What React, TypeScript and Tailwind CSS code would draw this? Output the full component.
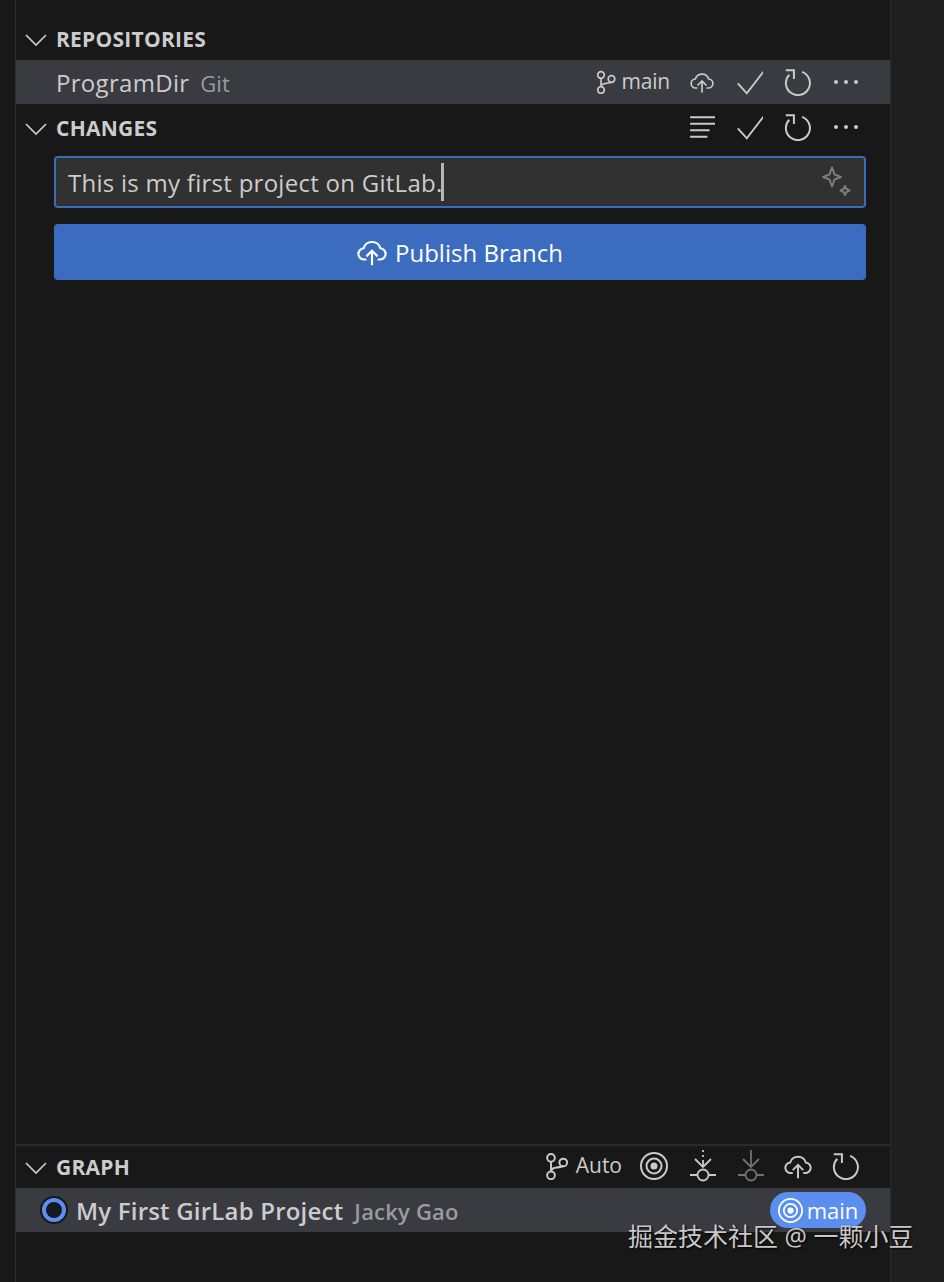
import React from "react";

const FONT = "font-['Open_Sans','Noto_Sans_CJK_SC',sans-serif]";

function Svg({ children, size = 24, className = "" }: { children: React.ReactNode; size?: number; className?: string }) {
  return (
    <svg width={size} height={size} viewBox="0 0 24 24" fill="none" stroke="currentColor" strokeWidth="1.7" className={className}>
      {children}
    </svg>
  );
}

const Chevron = () => (
  <svg width="24" height="24" viewBox="0 0 24 24" fill="none" stroke="#cccccc" strokeWidth="1.7" className="shrink-0">
    <path d="M2 7l10 10L22 7" />
  </svg>
);

const Branch = ({ size = 24 }: { size?: number }) => (
  <Svg size={size}>
    <circle cx="6" cy="5" r="3.300" />
    <circle cx="6" cy="20" r="3.300" />
    <circle cx="16.500" cy="9" r="3.300" />
    <path d="M6 8.300v8.400M6 16.500c.5-2.500 2.500-3 5-3.200s4.500-.8 5.500-1" />
  </Svg>
);

const Cloud = ({ size = 24 }: { size?: number }) => (
  <Svg size={size}>
    <path d="M7.500 18H6a4.500 4.500 0 0 1-.7-9A7 7 0 0 1 18.700 9a4.500 4.500 0 0 1-.7 9h-1.500" />
    <path d="M12 22.500V11.500M7.500 15.500l4.500-4.500 4.500 4.500" />
  </Svg>
);

const Check = () => (
  <Svg size={28} className="-translate-x-px -translate-y-px">
    <path d="M2 14l8 9L25 3.500" transform="translate(0.500 0.500) scale(0.96)" />
  </Svg>
);

const Refresh = () => (
  <Svg size={28}>
    <path d="M15.500 3.300A10.300 10.300 0 1 1 4.500 5.800" />
    <path d="M1.500 2h7v7.500" />
  </Svg>
);

const More = () => (
  <svg width="28" height="28" viewBox="0 0 28 28" fill="currentColor">
    <circle cx="4" cy="14" r="2" />
    <circle cx="14" cy="14" r="2" />
    <circle cx="24" cy="14" r="2" />
  </svg>
);

const ListIcon = () => (
  <Svg size={26}>
    <path d="M1 3h24M1 9h24M1 15h18M1 21h16" strokeWidth="2" />
  </Svg>
);

const Target = ({ size = 28 }: { size?: number }) => (
  <svg width={size} height={size} viewBox="0 0 28 28" fill="none" stroke="currentColor" strokeWidth="2">
    <circle cx="14" cy="14" r="13" />
    <circle cx="14" cy="14" r="7.500" />
    <circle cx="14" cy="14" r="2.500" fill="currentColor" />
  </svg>
);

const Fetch = () => (
  <svg width="28" height="32" viewBox="0 0 28 32" fill="none" stroke="currentColor" strokeWidth="1.8" className="translate-x-px">
    <path d="M14 0v2M14 5v2M14 10v6M6 9l8 8 8-8" />
    <circle cx="14" cy="25" r="5.500" />
    <path d="M1 25h7.500M19.500 25H27" />
  </svg>
);

const Pull = () => (
  <svg width="28" height="32" viewBox="0 0 28 32" fill="none" stroke="currentColor" strokeWidth="1.8" className="translate-x-px">
    <path d="M14 0v17M6 9l8 8 8-8" />
    <circle cx="14" cy="25" r="5.500" />
    <path d="M1 25h7.500M19.500 25H27" />
  </svg>
);

const Sparkle = () => (
  <svg width="30" height="30" viewBox="0 0 30 30" fill="none" stroke="#7c7c7c" strokeWidth="2">
    <path d="M11 1.500l2.500 7L20 11l-6.500 2.500L11 20.500l-2.500-7L2 11l6.500-2.500z" strokeLinejoin="round" />
    <path d="M24 20l1.500 3 3 1.500-3 1.500-1.500 3-1.500-3-3-1.500 3-1.500z" strokeLinejoin="round" />
  </svg>
);

function Action({ children }: { children: React.ReactNode }) {
  return <div className="w-12 h-8 flex items-center justify-center text-[#c9c9c9]">{children}</div>;
}

function Header({ title, children }: { title: string; children?: React.ReactNode }) {
  return (
    <div className="h-[42px] flex items-center pl-2 pr-5 pt-0.5 shrink-0">
      <Chevron />
      <span className="ml-2 text-[21px] font-bold text-[#cccccc] tracking-[0.25px]">{title}</span>
      <div className="ml-auto -mt-1 flex items-center">{children}</div>
    </div>
  );
}

export default function App() {
  return (
    <div className={`relative w-[944px] h-[1282px] overflow-hidden bg-[#1f1f1f] flex ${FONT}`}>
      <div className="w-[15px] shrink-0 bg-[#181818]" />
      {/* Source control sidebar */}
      <div className="w-[876px] shrink-0 bg-[#181818] border-x border-[#2b2b2b] flex flex-col">
        <div className="pt-[18px]">
          <Header title="REPOSITORIES" />
        </div>
        <div className="h-11 bg-[#3a3a41] flex items-center pl-10 pr-5 shrink-0">
          <span className="pt-0.5 text-[24px] text-[#cccccc] tracking-[0.3px]">ProgramDir</span>
          <span className="pt-0.5 ml-[11px] text-[22px] text-[#9a9a9f]">Git</span>
          <div className="ml-auto flex items-center">
            <div className="flex items-center text-[#c9c9c9] mr-2">
              <Branch />
              <span className="ml-[3px] text-[21px] text-[#cccccc] tracking-[-0.2px]">main</span>
            </div>
            <Action><Cloud /></Action>
            <Action><Check /></Action>
            <Action><Refresh /></Action>
            <Action><More /></Action>
          </div>
        </div>
        <div className="mt-[3px]">
          <Header title="CHANGES">
            <Action><ListIcon /></Action>
            <Action><Check /></Action>
            <Action><Refresh /></Action>
            <Action><More /></Action>
          </Header>
        </div>
        <div className="pl-[38px] pr-6 pt-[7px] flex flex-col gap-4 shrink-0">
          <div className="h-[52px] rounded bg-[#313131] border-2 border-[#3b6cbc] flex items-center pl-3 pr-3">
            <span className="pt-0.5 text-[24px] text-[#cccccc] tracking-[0.27px]">This is my first project on GitLab.</span>
            <span className="w-[3px] h-[38px] bg-[#b5b5b5] -ml-[2px]" />
            <div className="ml-auto mr-px -mt-0.5"><Sparkle /></div>
          </div>
          <div className="h-14 rounded bg-[#3b6cbf] flex items-center justify-center gap-2 text-white">
            <Cloud size={30} />
            <span className="pt-0.5 text-[24px]">Publish Branch</span>
          </div>
        </div>
        <div className="flex-1" />
        <div className="border-t-2 border-[#2b2b2b]">
          <Header title="GRAPH">
            <div className="flex items-center text-[#c9c9c9] mr-2">
              <Branch size={28} />
              <span className="ml-1 text-[21px] text-[#cccccc]">Auto</span>
            </div>
            <Action><Target /></Action>
            <Action><Fetch /></Action>
            <div className="opacity-50"><Action><Pull /></Action></div>
            <Action><Cloud size={28} /></Action>
            <Action><Refresh /></Action>
          </Header>
        </div>
        <div className="h-11 bg-[#3a3a41] flex items-center pl-[26px] pr-6 shrink-0">
          <div className="w-[24px] h-[24px] rounded-full border-[4px] border-[#5a8ff0] bg-[#141a24] ring-2 ring-[#181818] shrink-0" />
          <span className="ml-[10px] pt-0.5 text-[24px] font-semibold text-[#cccccc] tracking-[0.2px]">My First GirLab Project</span>
          <span className="ml-[11px] pt-0.5 text-[22px] font-semibold text-[#9a9a9f] tracking-[0.2px]">Jacky Gao</span>
          <div className="ml-auto h-9 w-24 rounded-full bg-[#5a8ff0] flex items-center justify-center gap-1 text-white">
            <Target size={25} />
            <span className="text-[22px]">main</span>
          </div>
        </div>
        <div className="h-[50px] shrink-0" />
      </div>
      <div className="flex-1" />
      {/* Watermark */}
      <div className="absolute left-[628px] top-[1218px] text-[25px] text-[#c8c8c8] whitespace-nowrap [text-shadow:1px_1px_2px_#000]">
        掘金技术社区 @ 一颗小豆
      </div>
    </div>
  );
}
